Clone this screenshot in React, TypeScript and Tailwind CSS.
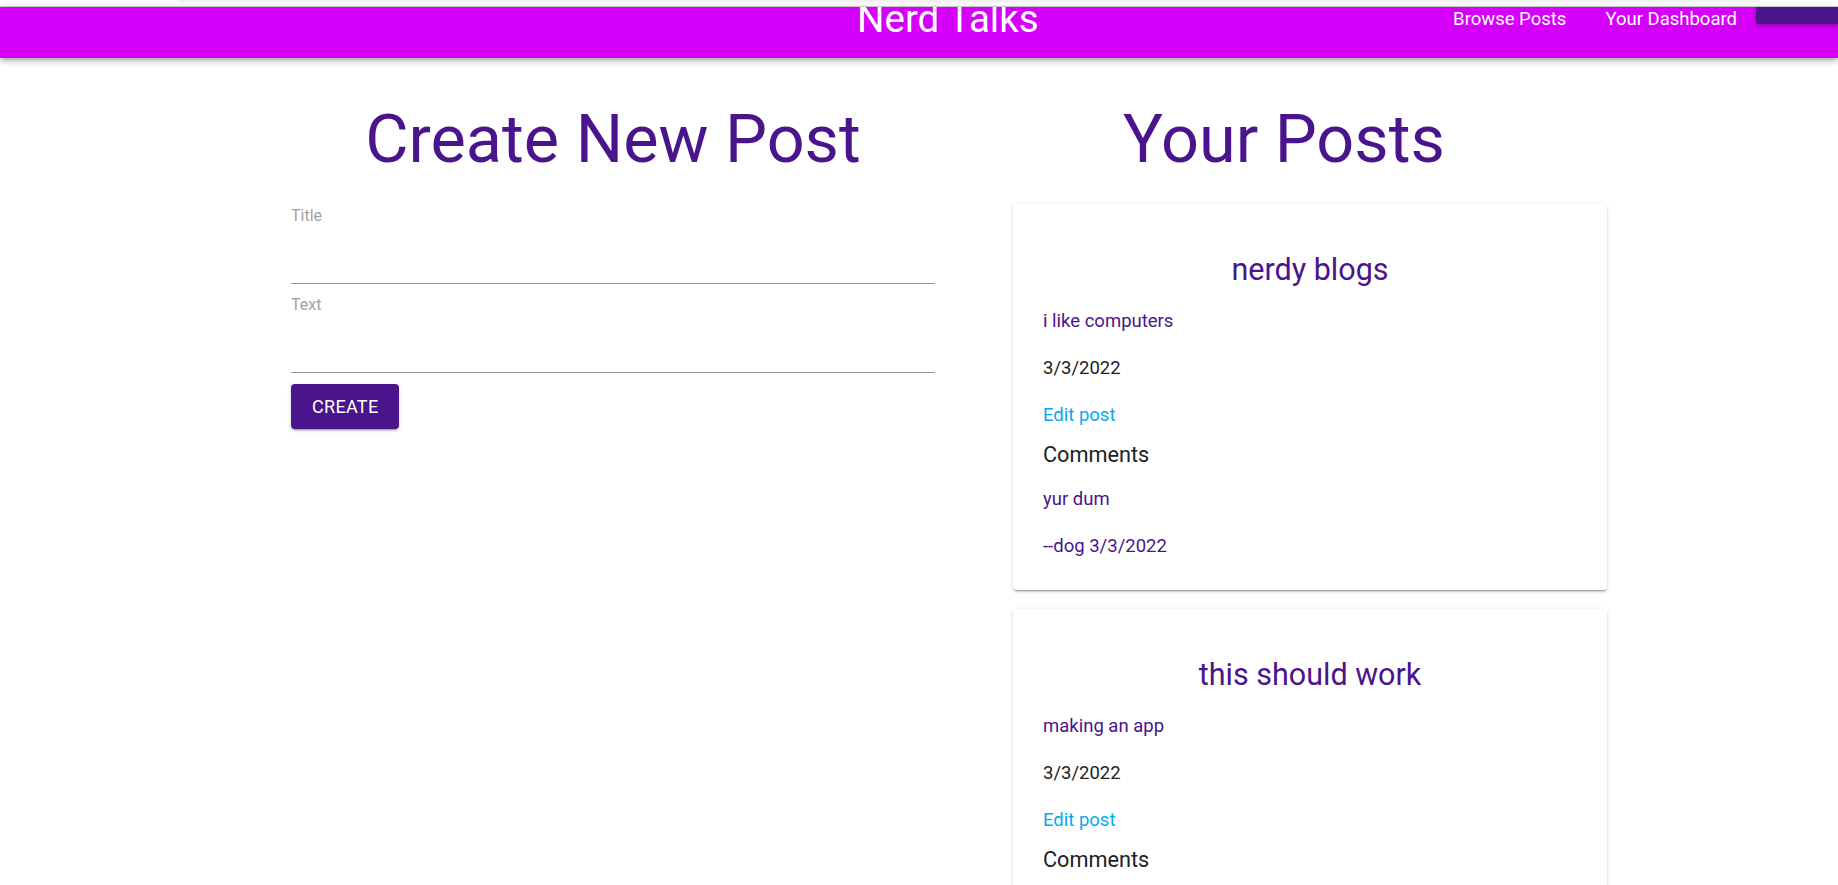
import React from "react";

interface Post {
  title: string;
  text: string;
  date: string;
  comments: { body: string; author: string; date: string }[];
}

const posts: Post[] = [
  {
    title: "nerdy blogs",
    text: "i like computers",
    date: "3/3/2022",
    comments: [{ body: "yur dum", author: "dog", date: "3/3/2022" }],
  },
  {
    title: "this should work",
    text: "making an app",
    date: "3/3/2022",
    comments: [{ body: "looks good", author: "cat", date: "3/3/2022" }],
  },
];

const Header = () => (
  <div>
    <div className="h-[6px] bg-white flex border-b border-[#d6d6d6] box-content">
      <div className="ml-[178px] w-[1582px] h-[2px] bg-[#f3f3f3]" />
    </div>
    <header className="h-[51px] bg-[#d500f9] flex items-start overflow-hidden shadow-[0px_2px_4px_-1px_rgba(0,0,0,0.2),0px_4px_5px_0px_rgba(0,0,0,0.14),0px_1px_10px_0px_rgba(0,0,0,0.12)] relative z-10">
      <h1 className="ml-[857px] -mt-[7px] text-[38.5px] leading-[38px] text-white">
        Nerd Talks
      </h1>
      <nav className="ml-auto flex items-start">
        <a className="mt-[1px] text-[18.5px] leading-[22px] text-white">
          Browse Posts
        </a>
        <a className="ml-[39px] mt-[1px] text-[18.5px] leading-[22px] text-white">
          Your Dashboard
        </a>
        <button className="ml-[19px] w-[82px] h-[17px] bg-[#4a148c] rounded-bl-[3px] shadow-[0px_2px_4px_rgba(0,0,0,0.3)]" />
      </nav>
    </header>
  </div>
);

const Field = ({ label }: { label: string }) => (
  <div className="flex flex-col">
    <label className="text-[16px] leading-[19px] text-[#a3a3a3]">{label}</label>
    <input className="h-[59px] border-b border-[#949494] outline-none" />
  </div>
);

const PostCard = ({ post }: { post: Post }) => (
  <div className="bg-white rounded-[4px] px-[30px] pt-[48px] pb-[30px] shadow-[0px_3px_1px_-2px_rgba(0,0,0,0.2),0px_2px_2px_0px_rgba(0,0,0,0.14),0px_1px_5px_0px_rgba(0,0,0,0.12)]">
    <h3 className="text-center text-[30.5px] leading-[36px] text-[#4a148c]">
      {post.title}
    </h3>
    <p className="mt-[20px] text-[18.5px] leading-[27px] text-[#4a148c]">
      {post.text}
    </p>
    <p className="mt-[20px] text-[18.5px] leading-[27px] text-[#212121]">
      {post.date}
    </p>
    <a className="block mt-[20px] text-[18.5px] leading-[27px] text-[#03a9f4]">
      Edit post
    </a>
    <h4 className="mt-[11px] text-[21.7px] leading-[30px] text-[#212121]">
      Comments
    </h4>
    {post.comments.map((c, i) => (
      <div key={i}>
        <p className="mt-[16px] text-[18.5px] leading-[27px] text-[#4a148c]">
          {c.body}
        </p>
        <p className="mt-[20px] text-[18.5px] leading-[27px] text-[#4a148c]">
          --{c.author} {c.date}
        </p>
      </div>
    ))}
  </div>
);

export default function App() {
  return (
    <div className="bg-white font-['Roboto','Liberation_Sans',sans-serif]">
      <Header />
      <main className="flex items-start pl-[291px] mt-[41px]">
        <section className="w-[644px]">
          <h2 className="text-center text-[66.6px] leading-[80px] text-[#4a148c]">
            Create New Post
          </h2>
          <form className="mt-[27px] flex flex-col gap-[11px]">
            <Field label="Title" />
            <Field label="Text" />
            <button
              type="button"
              className="self-start h-[45px] px-[21px] rounded-[4px] bg-[#4a148c] text-white text-[18px] tracking-[0.3px] shadow-[0px_3px_1px_-2px_rgba(0,0,0,0.2),0px_2px_2px_0px_rgba(0,0,0,0.14),0px_1px_5px_0px_rgba(0,0,0,0.12)]"
            >
              CREATE
            </button>
          </form>
        </section>
        <section className="ml-[78px] w-[594px]">
          <h2 className="pr-[52px] text-center text-[66.6px] leading-[80px] text-[#4a148c]">
            Your Posts
          </h2>
          <div className="mt-[25px] flex flex-col gap-[19px]">
            {posts.map((p) => (
              <PostCard key={p.title} post={p} />
            ))}
          </div>
        </section>
      </main>
    </div>
  );
}
